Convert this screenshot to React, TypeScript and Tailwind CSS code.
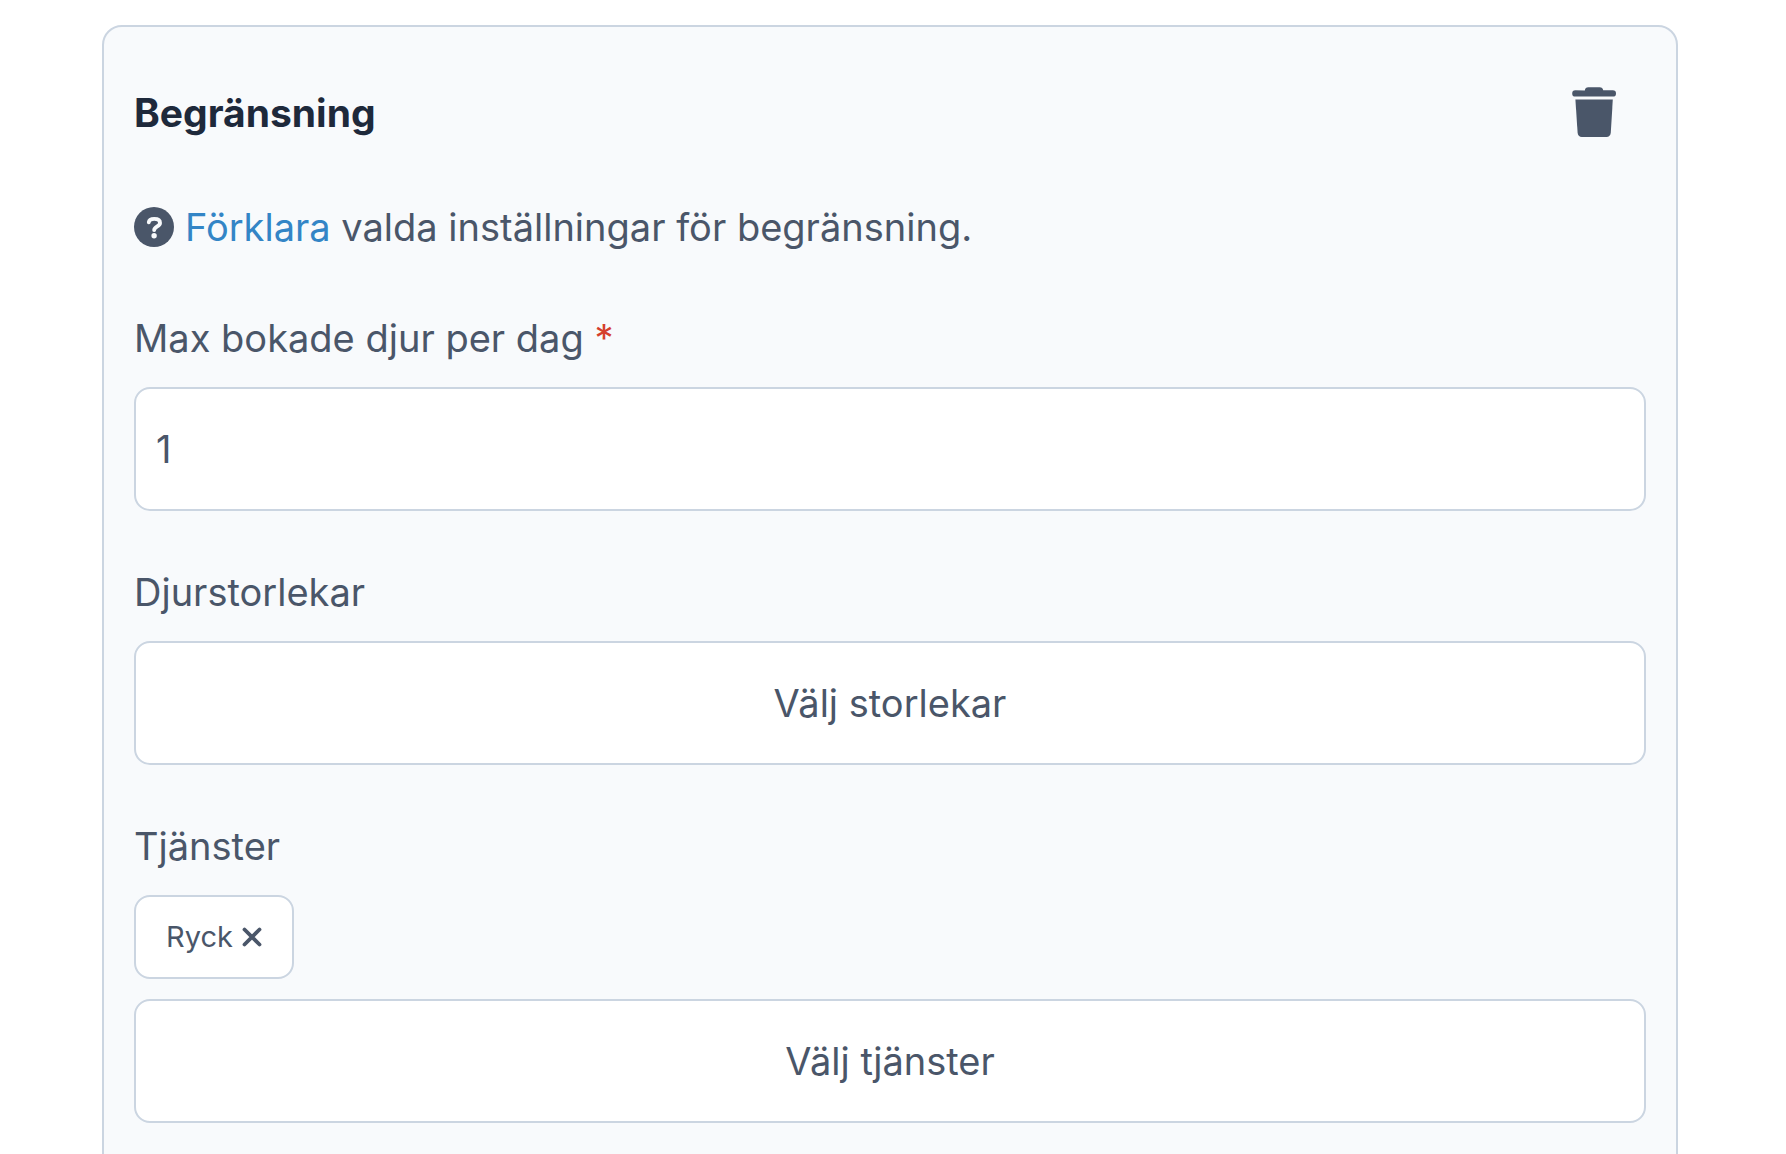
import React from "react";

function TrashIcon() {
  return (
    <svg width="44" height="51" viewBox="0 0 44 51" fill="currentColor" aria-hidden="true">
      <path d="M12.8 3.4 C13.2 1.2 14.2 .2 16.4 .2 H27.6 C29.8 .2 30.8 1.2 31.2 3.2 H40.8 A3.2 3.2 0 0 1 40.8 9.6 H3.4 A3.2 3.2 0 0 1 3.4 3.2 Z" />
      <path d="M3.4 12.6 H40.8 L38.8 45.6 Q38.4 50 34.4 50 H9.8 Q6 50 5.6 45.6 Z" />
    </svg>
  );
}

function HelpIcon() {
  return (
    <svg width="40" height="40" viewBox="0 0 40 40" aria-hidden="true">
      <circle cx="20" cy="20" r="20" fill="currentColor" />
      <path d="M14.8 15.2 C15.2 12.6 17 11.9 20.2 11.9 C23.8 11.9 26 13.2 26 15.9 C26 19.4 20.4 19.2 20.2 23" fill="none" stroke="#f8fafc" strokeWidth="3.9" strokeLinecap="round" />
      <circle cx="20.1" cy="28.8" r="2.7" fill="#f8fafc" />
    </svg>
  );
}

function CrossIcon() {
  return (
    <svg width="20" height="20" viewBox="0 0 20 20" fill="none" stroke="currentColor" strokeWidth="3.8" strokeLinecap="round" aria-hidden="true">
      <path d="M2.5 2.5 L17.5 17.5 M17.5 2.5 L2.5 17.5" />
    </svg>
  );
}

const control =
  "h-[124px] w-full rounded-2xl border-2 border-[#cbd5e1] bg-white px-5";

export default function App() {
  return (
    <main className="h-screen overflow-hidden bg-white pt-[25px] pr-[108px] pl-[102px] font-[Inter,sans-serif] text-[38px] leading-[60px] text-[#4a5669]">
      <section className="min-h-[1200px] rounded-[20px] border-2 border-[#cbd5e1] bg-[#f8fafc] p-[30px]">
        <header className="flex items-center justify-between">
          <h2 className="text-[39px] font-bold text-[#1e293b]">Begränsning</h2>
          <button type="button" aria-label="Ta bort" className="p-[30px]">
            <TrashIcon />
          </button>
        </header>

        <p className="mt-[29px] flex items-center gap-[11px]">
          <HelpIcon />
          <span>
            <a href="#forklara" className="text-[#3385c6]">Förklara</a> valda inställningar för begränsning.
          </span>
        </p>

        <div className="mt-[51px] flex flex-col gap-[19px]">
          <label htmlFor="max">
            Max bokade djur per dag <span className="text-[#d53f2c]">*</span>
          </label>
          <input id="max" type="text" inputMode="numeric" defaultValue="1" className={control} />
        </div>

        <div className="mt-[51px] flex flex-col gap-[19px]">
          <span id="sizes">Djurstorlekar</span>
          <button type="button" aria-describedby="sizes" className={control}>Välj storlekar</button>
        </div>

        <div className="mt-[51px] flex flex-col items-start gap-[19px]">
          <span id="services">Tjänster</span>
          <div className="flex w-full flex-col items-start gap-5">
            <button type="button" aria-label="Ryck, ta bort" className="flex h-[84px] items-center gap-[9px] rounded-2xl border-2 border-[#cbd5e1] bg-white px-[30px] text-[29px]">
              Ryck <CrossIcon />
            </button>
            <button type="button" aria-describedby="services" className={control}>Välj tjänster</button>
          </div>
        </div>
      </section>
    </main>
  );
}
